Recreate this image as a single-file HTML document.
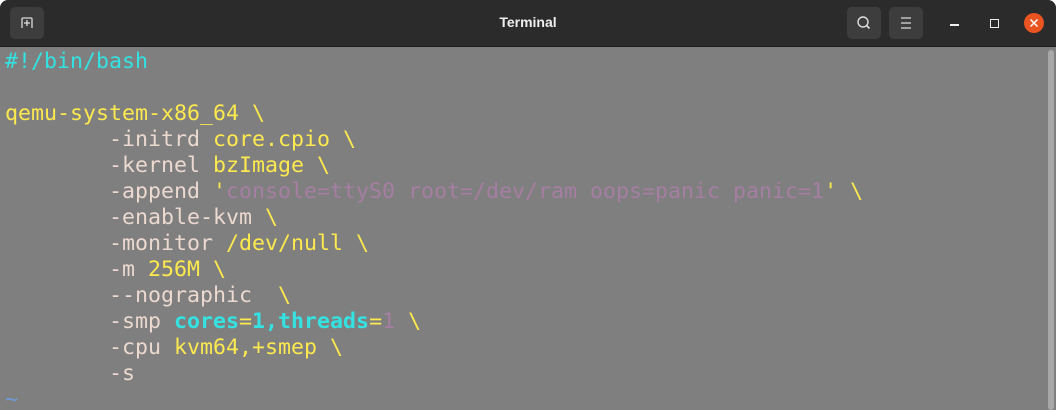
<!DOCTYPE html>
<html><head><style>
html,body{margin:0;padding:0;width:1056px;height:410px;overflow:hidden;background:#fff;}
.win{position:absolute;left:0;top:0;width:1056px;height:410px;background:#7f7f7f;border-radius:8px 8px 0 0;overflow:hidden;}
.tb{position:absolute;left:0;top:0;width:1056px;height:46px;background:#2b2b2b;border-bottom:1px solid #1e1e1e;}
.btn{position:absolute;top:7px;width:34px;height:32px;background:#3d3d3d;border-radius:5px;}
.title{position:absolute;left:0;width:1056px;top:14px;text-align:center;color:#eee;font:bold 14px "Liberation Sans",sans-serif;}
pre{position:absolute;left:5px;top:49px;margin:0;font:21.6px/26px "DejaVu Sans Mono",monospace;color:#ecd9d0;}
.c{color:#34e2e2}.y{color:#fce94f}.s{color:#a57ea2}.cb{color:#34e2e2;font-weight:bold}.t{color:#6e9bd8}
.sb{position:absolute;left:1048px;top:50px;width:6px;height:360px;background:#a8a8a8;border-radius:3px;}
</style></head><body><div class="win">
<div class="tb">
<div class="btn" style="left:10px"><svg width="34" height="32"><path d="M12 21V12a1 1 0 0 1 1-1h8a1 1 0 0 1 1 1v9M17 13v6M14 16h6" stroke="#ddd" stroke-width="1.3" fill="none"/></svg></div>
<div class="title">Terminal</div>
<div class="btn" style="left:847px"><svg width="34" height="32"><circle cx="16" cy="15" r="5" stroke="#ddd" stroke-width="1.4" fill="none"/><path d="M19.5 18.5l3 3" stroke="#ddd" stroke-width="1.6"/></svg></div>
<div class="btn" style="left:889px"><svg width="34" height="32"><path d="M12 11h10M12 16h10M12 21h10" stroke="#ddd" stroke-width="1.3"/></svg></div>
<div style="position:absolute;left:950px;top:24px;width:9px;height:1.5px;background:#eee"></div>
<div style="position:absolute;left:990px;top:19px;width:7px;height:7px;border:1.3px solid #eee"></div>
<div style="position:absolute;left:1024px;top:13px;width:20px;height:20px;border-radius:50%;background:#e95420"><svg width="20" height="20"><path d="M6.5 6.5l7 7M13.5 6.5l-7 7" stroke="#fff" stroke-width="1.5"/></svg></div>
</div>
<pre><span class="c">#!/bin/bash</span>

<span class="y">qemu-system-x86_64 \</span>
        -initrd <span class="y">core.cpio \</span>
        -kernel <span class="y">bzImage \</span>
        -append <span class="y">'</span><span class="s">console=ttyS0 root=/dev/ram oops=panic panic=1</span><span class="y">' \</span>
        -enable-kvm <span class="y">\</span>
        -monitor <span class="y">/dev/null \</span>
        -m <span class="y">256M \</span>
        --nographic  <span class="y">\</span>
        -smp <span class="cb">cores</span><span class="y">=</span><span class="cb">1,threads</span><span class="y">=</span><span class="s">1</span> <span class="y">\</span>
        -cpu <span class="y">kvm64,+smep \</span>
        -s
<span class="t">~</span></pre>
<div class="sb"></div>
</div></body></html>
